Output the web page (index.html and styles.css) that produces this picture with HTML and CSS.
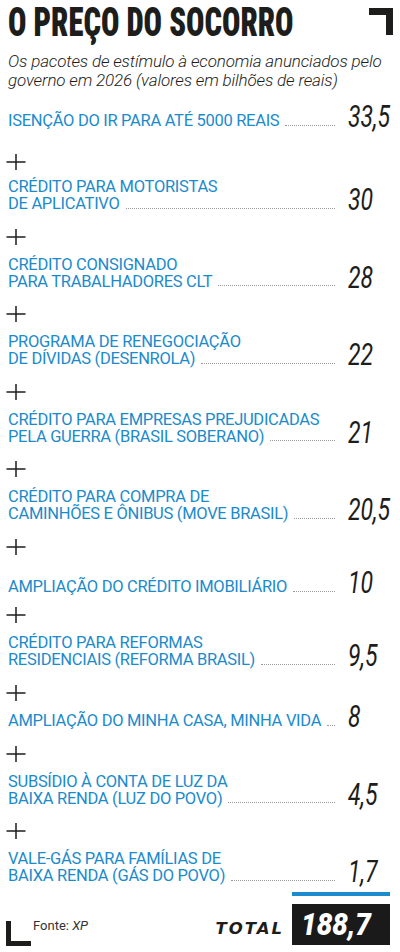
FILE: index.html
```html
<!DOCTYPE html>
<html lang="pt-BR">
<head>
<meta charset="utf-8">
<title>O preço do socorro</title>
<link rel="stylesheet" href="styles.css">
</head>
<body>
<main class="page">
  <header class="head">
    <h1 class="title">O PREÇO DO SOCORRO</h1>
    <span class="corner-tr"></span>
  </header>
  <p class="lede">Os pacotes de estímulo à economia anunciados pelo<br>governo em 2026 (valores em bilhões de reais)</p>

  <section class="list">
    <div class="row">
      <p class="label"><span class="line-last">ISENÇÃO DO IR PARA ATÉ 5000 REAIS<i class="leader"></i></span></p>
      <span class="value">33,5</span>
    </div>
    <svg class="plus plus--first" viewBox="0 0 20 18"><path d="M0.5 9H19.5M10 1V17"/></svg>
    <div class="row">
      <p class="label"><span>CRÉDITO PARA MOTORISTAS</span><span class="line-last">DE APLICATIVO<i class="leader"></i></span></p>
      <span class="value">30</span>
    </div>
    <svg class="plus" viewBox="0 0 20 18"><path d="M0.5 9H19.5M10 1V17"/></svg>
    <div class="row">
      <p class="label"><span>CRÉDITO CONSIGNADO</span><span class="line-last">PARA TRABALHADORES CLT<i class="leader"></i></span></p>
      <span class="value">28</span>
    </div>
    <svg class="plus" viewBox="0 0 20 18"><path d="M0.5 9H19.5M10 1V17"/></svg>
    <div class="row">
      <p class="label"><span>PROGRAMA DE RENEGOCIAÇÃO</span><span class="line-last">DE DÍVIDAS (DESENROLA)<i class="leader"></i></span></p>
      <span class="value">22</span>
    </div>
    <svg class="plus" viewBox="0 0 20 18"><path d="M0.5 9H19.5M10 1V17"/></svg>
    <div class="row">
      <p class="label"><span>CRÉDITO PARA EMPRESAS PREJUDICADAS</span><span class="line-last">PELA GUERRA (BRASIL SOBERANO)<i class="leader"></i></span></p>
      <span class="value">21</span>
    </div>
    <svg class="plus" viewBox="0 0 20 18"><path d="M0.5 9H19.5M10 1V17"/></svg>
    <div class="row">
      <p class="label"><span>CRÉDITO PARA COMPRA DE</span><span class="line-last">CAMINHÕES E ÔNIBUS (MOVE BRASIL)<i class="leader"></i></span></p>
      <span class="value">20,5</span>
    </div>
    <svg class="plus" viewBox="0 0 20 18"><path d="M0.5 9H19.5M10 1V17"/></svg>
    <div class="row row--low">
      <p class="label"><span class="line-last">AMPLIAÇÃO DO CRÉDITO IMOBILIÁRIO<i class="leader"></i></span></p>
      <span class="value">10</span>
    </div>
    <svg class="plus plus--tight" viewBox="0 0 20 18"><path d="M0.5 9H19.5M10 1V17"/></svg>
    <div class="row">
      <p class="label"><span>CRÉDITO PARA REFORMAS</span><span class="line-last">RESIDENCIAIS (REFORMA BRASIL)<i class="leader"></i></span></p>
      <span class="value">9,5</span>
    </div>
    <svg class="plus" viewBox="0 0 20 18"><path d="M0.5 9H19.5M10 1V17"/></svg>
    <div class="row row--high">
      <p class="label"><span class="line-last">AMPLIAÇÃO DO MINHA CASA, MINHA VIDA<i class="leader"></i></span></p>
      <span class="value">8</span>
    </div>
    <svg class="plus" viewBox="0 0 20 18"><path d="M0.5 9H19.5M10 1V17"/></svg>
    <div class="row">
      <p class="label"><span>SUBSÍDIO À CONTA DE LUZ DA</span><span class="line-last">BAIXA RENDA (LUZ DO POVO)<i class="leader"></i></span></p>
      <span class="value">4,5</span>
    </div>
    <svg class="plus" viewBox="0 0 20 18"><path d="M0.5 9H19.5M10 1V17"/></svg>
    <div class="row">
      <p class="label"><span>VALE-GÁS PARA FAMÍLIAS DE</span><span class="line-last">BAIXA RENDA (GÁS DO POVO)<i class="leader"></i></span></p>
      <span class="value">1,7</span>
    </div>
  </section>

  <footer class="foot">
    <div class="source">
      <span class="corner-bl"></span>
      <span class="source-text">Fonte: <em>XP</em></span>
    </div>
    <div class="total">
      <span class="total-label">TOTAL</span>
      <div class="sum">
        <span class="sum-bar"></span>
        <span class="sum-box"><span class="sum-num">188,7</span></span>
      </div>
    </div>
  </footer>
</main>
</body>
</html>
```

FILE: styles.css
```css
* {
  box-sizing: border-box;
  margin: 0;
  padding: 0;
}

html,
body {
  background: #ffffff;
}

body {
  width: 400px;
  height: 952px;
  overflow: hidden;
  font-family: Roboto, "Liberation Sans", sans-serif;
  color: #1d1d1b;
}

.page {
  padding: 3px 7px 0 8px;
}

/* header */
.head {
  display: grid;
  grid-template-columns: minmax(0, 1fr) auto;
  align-items: start;
}

.title {
  font-size: 40px;
  line-height: 40px;
  font-weight: 900;
  font-stretch: 75%;
  white-space: nowrap;
  transform: scaleX(0.765);
  transform-origin: left center;
}

.corner-tr {
  display: block;
  width: 24px;
  height: 27px;
  margin-top: 5px;
  border-top: 7px solid #1d1d1b;
  border-right: 7px solid #1d1d1b;
}

.lede {
  margin-top: 9px;
  font-size: 17px;
  line-height: 18.5px;
  font-style: italic;
  font-weight: 300;
  letter-spacing: -0.16px;
  white-space: nowrap;
}

/* list */
.list {
  display: flex;
  flex-direction: column;
  margin-top: 14px;
}

.row {
  display: grid;
  grid-template-columns: minmax(0, 1fr) 45px;
  column-gap: 13px;
  align-items: end;
}

.row--low {
  margin-top: 3.5px;
}

.row--high {
  margin-top: -8.5px;
}

.label {
  display: flex;
  flex-direction: column;
  color: #1b8bcc;
  font-size: 16.5px;
  line-height: 17px;
  font-weight: 400;
  letter-spacing: -0.3px;
  white-space: nowrap;
}

.line-last {
  display: flex;
  align-items: flex-end;
}

.leader {
  flex: 1;
  min-width: 4px;
  margin: 0 0 3.5px 6px;
  border-bottom: 1px dotted #9a9a9a;
}

.value {
  display: block;
  font-size: 32px;
  line-height: 26px;
  font-style: italic;
  font-weight: 400;
  white-space: nowrap;
  transform: scaleX(0.72);
  transform-origin: left center;
}

.plus {
  display: block;
  width: 20px;
  height: 18px;
  margin: 15.5px 0 10px -2px;
  fill: none;
  stroke: #1d1d1b;
  stroke-width: 1.5;
}

.plus--first {
  margin-top: 24px;
  margin-bottom: 7px;
}

.plus--tight {
  margin-top: 11px;
}

/* footer */
.foot {
  display: flex;
  justify-content: space-between;
  align-items: flex-end;
  margin-top: 8px;
}

.source {
  display: flex;
  align-items: flex-start;
  margin: 0 0 -1px -2px;
}

.corner-bl {
  display: block;
  width: 25px;
  height: 25px;
  border-left: 5px solid #1d1d1b;
  border-bottom: 5px solid #1d1d1b;
}

.source-text {
  margin: -2px 0 0 2px;
  font-size: 13px;
  line-height: 13px;
  color: #333333;
}

.source-text em {
  font-style: italic;
}

.total {
  display: flex;
  align-items: flex-end;
  gap: 8px;
  margin-right: 3px;
}

.total-label {
  margin-bottom: 8.2px;
  font-family: "DejaVu Sans", sans-serif;
  font-size: 16.5px;
  line-height: 17px;
  font-weight: 700;
  font-style: italic;
  letter-spacing: 2px;
}

.sum {
  display: flex;
  flex-direction: column;
  width: 98px;
}

.sum-bar {
  display: block;
  height: 4px;
  background: #1b8dcf;
}

.sum-box {
  display: block;
  height: 41px;
  margin-top: 8px;
  padding-left: 9px;
  background: #1a1a1a;
  color: #ffffff;
  font-size: 31px;
  line-height: 41px;
  font-weight: 900;
  font-style: italic;
}

.sum-num {
  display: inline-block;
  transform: scaleX(0.9);
  transform-origin: left center;
}
```
